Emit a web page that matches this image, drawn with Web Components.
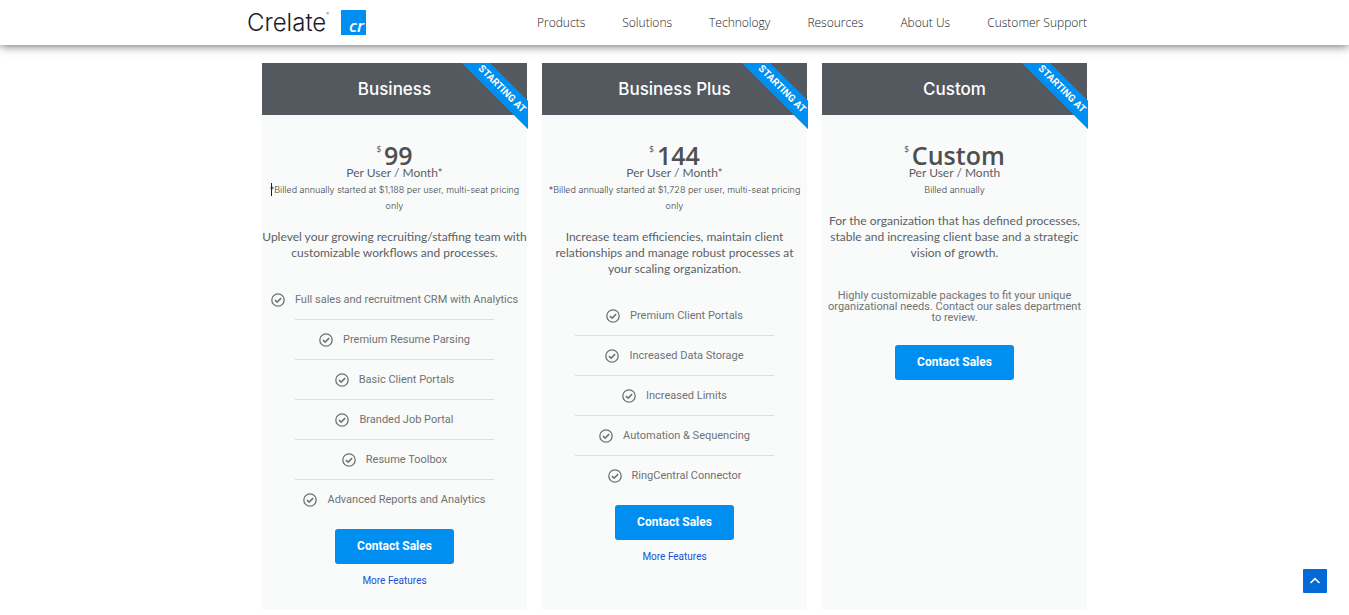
<!DOCTYPE html>
<html lang="en">
<head>
<meta charset="utf-8">
<meta name="viewport" content="width=device-width, initial-scale=1">
<title>Crelate Pricing</title>
<style>
  html { background: #fff; }
  body { margin: 0; font-family: Lato, "Open Sans", sans-serif; color: #54595f; }
</style>
</head>
<body>
<pricing-page></pricing-page>

<template id="t-page">
  <style>
    :host { display: block; }
    main {
      max-width: 825px; margin: 0 auto; padding: 18px 0 6px;
      display: grid; grid-template-columns: repeat(3, minmax(0, 1fr)); gap: 15px;
    }
  </style>
  <site-header></site-header>
  <main>
    <plan-card name="Business" price="99" period="Per User / Month*" more caret>
      <span slot="billing">*Billed annually started at $1,188 per user, multi-seat pricing only</span>
      <span slot="summary">Uplevel your growing recruiting/staffing team with customizable workflows and processes.</span>
      <feature-list slot="details" items="Full sales and recruitment CRM with Analytics|Premium Resume Parsing|Basic Client Portals|Branded Job Portal|Resume Toolbox|Advanced Reports and Analytics"></feature-list>
    </plan-card>
    <plan-card name="Business Plus" price="144" period="Per User / Month*" more>
      <span slot="billing">*Billed annually started at $1,728 per user, multi-seat pricing only</span>
      <span slot="summary">Increase team efficiencies, maintain client relationships and manage robust processes at your scaling organization.</span>
      <feature-list slot="details" items="Premium Client Portals|Increased Data Storage|Increased Limits|Automation &amp; Sequencing|RingCentral Connector"></feature-list>
    </plan-card>
    <plan-card name="Custom" price="Custom" period="Per User / Month">
      <span slot="billing">Billed annually</span>
      <span slot="summary">For the organization that has defined processes, stable and increasing client base and a strategic vision of growth.</span>
      <plan-note slot="details">Highly customizable packages to fit your unique organizational needs. Contact our sales department to review.</plan-note>
    </plan-card>
  </main>
  <scroll-top></scroll-top>
</template>

<template id="t-header">
  <style>
    :host { display: block; position: sticky; top: 0; z-index: 2; background: #fff; box-shadow: 0 0 10px rgba(0,0,0,.7); }
    .bar {
      max-width: 840px; margin: 0 auto; padding-right: 15px; min-height: 45px;
      display: flex; align-items: center; justify-content: space-between;
    }
    nav { display: flex; gap: 37px; }
    nav a { font: 300 12px/16px "Open Sans", sans-serif; color: #222; text-decoration: none; white-space: nowrap; }
  </style>
  <div class="bar">
    <brand-logo></brand-logo>
    <nav aria-label="Main">
      <a href="#products">Products</a>
      <a href="#solutions">Solutions</a>
      <a href="#technology">Technology</a>
      <a href="#resources">Resources</a>
      <a href="#about">About Us</a>
      <a href="#support">Customer Support</a>
    </nav>
  </div>
</template>

<template id="t-logo">
  <style>
    :host { display: block; }
    a { display: flex; align-items: center; gap: 12px; text-decoration: none; color: #1c1b2b; }
    .word { display: flex; align-items: flex-start; font: 300 24px/26px Inter, sans-serif; }
    .mark { font-size: 4px; line-height: 8px; }
    svg { display: block; width: 25px; height: 25px; }
    text { font: italic 600 17px "Open Sans", sans-serif; fill: #fff; }
  </style>
  <a href="#home" aria-label="Crelate home">
    <span class="word">Crelate<span class="mark">®</span></span>
    <svg viewBox="0 0 25 25" aria-hidden="true">
      <rect width="25" height="25" fill="#008ff0"/>
      <text x="8" y="22">cr</text>
    </svg>
  </a>
</template>

<template id="t-card">
  <style>
    :host { display: block; position: relative; background: #f9fbfa; text-align: center; }
    h2 { margin: 0; background: #54595f; color: #fff; font: 500 17px/52px Inter, sans-serif; }
    .body { padding: 30px 0 20px; }
    .price { display: flex; justify-content: center; align-items: flex-start; gap: 3px; font: 600 25px/20px "Open Sans", sans-serif; color: #4f4f50; }
    .currency { font: 400 8px/8px Lato, sans-serif; }
    .period, .summary { font: 400 12px/16px Lato, sans-serif; color: #5b6066; }
    .billing { position: relative; padding: 1px 5px 0; font: 300 9px/16px Inter, sans-serif; color: #3f444a; }
    :host([caret]) .billing::before { content: ""; position: absolute; left: 9px; top: 2px; width: 1px; height: 13px; background: #222; }
    .summary { margin-top: 15px; }
    :host(:not([caret])) .summary { padding: 0 5px; }
    .details { padding: 19px 0 10px; }
    button {
      border: 0; border-radius: 3px; padding: 0 22px; height: 35px; cursor: pointer;
      background: #008ff0; color: #fff; font: 700 12px/35px Roboto, sans-serif;
    }
    .more { display: none; margin-top: 9px; font: 400 10px/16px Roboto, sans-serif; }
    :host([more]) .more { display: block; }
    .more a { color: #1a4fd6; text-decoration: none; }
    .corner { position: absolute; top: 0; right: -1px; width: 66px; height: 66px; overflow: hidden; }
    .ribbon {
      position: absolute; left: -10px; top: 16px; width: 100px; transform: rotate(45deg);
      background: #008ff0; color: #fff; font: 700 10px/20px Roboto, sans-serif; white-space: nowrap;
    }
  </style>
  <h2></h2>
  <div class="body">
    <div class="price"><span class="currency">$</span><span class="amount"></span></div>
    <div class="period"></div>
    <div class="billing"><slot name="billing"></slot></div>
    <div class="summary"><slot name="summary"></slot></div>
    <div class="details"><slot name="details"></slot></div>
    <button type="button">Contact Sales</button>
    <div class="more"><a href="#features">More Features</a></div>
  </div>
  <div class="corner"><div class="ribbon">STARTING AT</div></div>
</template>

<template id="t-list">
  <style>
    :host { display: block; }
    ul { list-style: none; margin: 0; padding: 0; }
    li { display: flex; flex-wrap: wrap; justify-content: center; align-items: center; column-gap: 10px; font: 400 11px/39px Roboto, sans-serif; color: #707274; }
    li + li::before { content: ""; flex: none; width: 75%; height: 1px; margin: 0 12%; background: #dcdddd; }
    svg { width: 14px; height: 14px; flex: none; }
  </style>
  <ul></ul>
</template>

<template id="t-note">
  <style>
    :host { display: block; padding: 10px 5px 12px; font: 400 11px/11px Roboto, sans-serif; color: #707274; }
  </style>
  <slot></slot>
</template>

<template id="t-top">
  <style>
    :host { position: fixed; right: 22px; bottom: 22px; z-index: 3; display: block; }
    button { display: flex; align-items: center; justify-content: center; width: 24px; height: 24px; padding: 0; border: 0; border-radius: 1px; background: #0468d7; cursor: pointer; }
    svg { width: 12px; height: 8px; }
  </style>
  <button type="button" aria-label="Back to top">
    <svg viewBox="0 0 12 8" fill="none" stroke="#fff" stroke-width="1.6" aria-hidden="true"><path d="M1.5 6 6 1.7 10.5 6"/></svg>
  </button>
</template>

<script>
  class TemplateElement extends HTMLElement {
    constructor() {
      super();
      this.attachShadow({ mode: 'open' })
        .append(document.getElementById(this.constructor.template).content.cloneNode(true));
    }
  }
  customElements.define('brand-logo', class extends TemplateElement { static template = 't-logo'; });
  customElements.define('site-header', class extends TemplateElement { static template = 't-header'; });
  customElements.define('plan-note', class extends TemplateElement { static template = 't-note'; });
  customElements.define('scroll-top', class extends TemplateElement {
    static template = 't-top';
    connectedCallback() {
      this.shadowRoot.querySelector('button').onclick = () => scrollTo({ top: 0, behavior: 'smooth' });
    }
  });
  customElements.define('plan-card', class extends TemplateElement {
    static template = 't-card';
    connectedCallback() {
      const set = (selector, attr) => {
        this.shadowRoot.querySelector(selector).textContent = this.getAttribute(attr);
      };
      set('h2', 'name');
      set('.amount', 'price');
      set('.period', 'period');
    }
  });
  customElements.define('feature-list', class extends TemplateElement {
    static template = 't-list';
    connectedCallback() {
      const icon = '<svg viewBox="0 0 14 14" fill="none" stroke="#6f7173" aria-hidden="true">' +
        '<circle cx="7" cy="7" r="6.2" stroke-width="1.3"/>' +
        '<path d="M4 7.2 6.1 9.2 10.1 5.1" stroke-width="1.6"/></svg>';
      const ul = this.shadowRoot.querySelector('ul');
      for (const text of this.getAttribute('items').split('|')) {
        const li = document.createElement('li');
        li.innerHTML = icon;
        const label = document.createElement('span');
        label.textContent = text;
        li.append(label);
        ul.append(li);
      }
    }
  });
  customElements.define('pricing-page', class extends TemplateElement { static template = 't-page'; });
</script>
</body>
</html>
